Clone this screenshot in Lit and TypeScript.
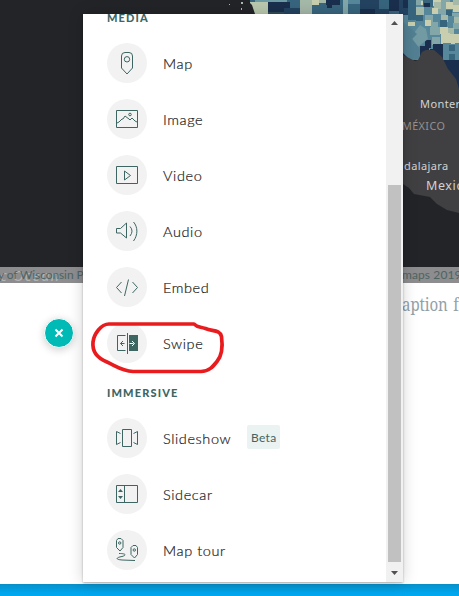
import { LitElement, html, svg, css } from "lit";
import { customElement } from "lit/decorators.js";

const pin = svg`<path d="M9 .5h4q3.500 0 3.500 3.500v12l-5.500 6-5.500-6V4Q5.500.5 9 .5z"/><circle cx="11" cy="7.300" r="2.700"/>`;
const icons: Record<string, unknown> = {
  Map: pin,
  Image: svg`<path d="M.5 2.500h21v17H.5zM1 15l2-1 3-3h1l2-3 4 3 1 1 2-2 2 2 1 1 2 1"/><circle cx="14" cy="6.500" r="1.300"/>`,
  Video: svg`<path d="M.5 2.500h21v17H.5zM8.500 7v9l6-4.500z"/>`,
  Audio: svg`<path d="M.5 8.500h4l6-5.500v15l-6-5H.5zM14 6.500q4 4.500 0 9.500M17.500 2c4.500 5 4.500 13 0 19"/>`,
  Embed: svg`<path d="M5.500 6l-5 5.500 5 5.500M16.500 6l5 5.500-5 5.500M12.500 3.500l-4 16.500"/>`,
  Swipe: svg`<path d="M9.500 3.500h-8v15h8M11.500 1v21M8.500 11.500H4.500M7 9l-2.500 2.500L7 14"/><path class="solid" d="M13 3h9v16h-9z"/><path class="light" d="M13.500 11.500h4M16 9l2.500 2.500L16 14"/>`,
  Slideshow: svg`<path d="M6.500 2.500h9v17h-9zM4.500 6.500l-4-2v13l4-2M17.500 6.500l4-2v13l-4-2"/>`,
  Sidecar: svg`<path d="M.5 2.500h21v17H.5zM8.500 2.500v17"/><path class="solid" d="M2 9l2.500-3L7 9zM2 13l2.500 3L7 13z"/>`,
  "Map tour": svg`<path d="M2-.5h3l2 2v7l-3 3.500-3.500-3.500v-7zM17 6.500h3l1.500 2v7l-3 3.500-3.500-3.500v-7zM3 14.500c8 0 7 2 3 3-6 1-7 3 0 3.500l13 .5"/><circle cx="3.700" cy="4" r="1.200"/><circle cx="18.300" cy="11" r="1.200"/>`,
};

const B = "#1a2f4d", N = "#234361", M = "#38657e", T = "#57879a", L = "#83a7a9", G = "#a5b9a9", Y = "#c9cfae";
const tiles: [number, number, number, number, string][] = [
  [250, 0, 209, 14, M], [255, 0, 32, 2, "#6d9ba5"], [250, 2, 18, 12, "#b9c9ae"], [268, 2, 22, 10, B],
  [268, 12, 16, 2, "#304b57"], [284, 8, 16, 6, N], [300, 0, 12, 14, G], [312, 0, 7, 5, Y], [319, 0, 8, 3, G],
  [326, 0, 14, 5, B], [327, 5, 5, 3, B], [343, 0, 5, 14, L], [348, 0, 12, 4, T], [348, 4, 12, 10, M],
  [360, 0, 19, 9, N], [360, 9, 15, 5, B], [375, 9, 14, 5, N], [389, 0, 10, 11, B], [399, 0, 5, 14, N],
  [403, 0, 56, 60, T], [403, 0, 13, 8, B], [408, 0, 8, 20, M], [403, 8, 5, 7, N],
  [416, 0, 7, 5, L], [421, 1, 4, 4, Y], [423, 0, 10, 7, M], [424, 3, 6, 4, B], [433, 0, 8, 6, Y],
  [434, 2, 7, 7, G], [441, 0, 9, 9, L], [446, 2, 7, 7, Y], [453, 0, 6, 5, G], [453, 5, 6, 7, Y],
  [416, 7, 8, 8, G], [424, 8, 10, 7, T], [432, 8, 6, 6, Y], [438, 9, 8, 6, L], [446, 10, 6, 6, M],
  [452, 13, 7, 6, L], [416, 15, 7, 6, M], [425, 15, 8, 7, L], [433, 14, 8, 6, T], [441, 15, 7, 7, G],
  [448, 16, 6, 6, T], [454, 17, 5, 6, G], [408, 22, 7, 4, Y], [425, 20, 6, 6, Y], [431, 22, 7, 6, L],
  [440, 20, 7, 7, M], [447, 22, 6, 6, T], [453, 23, 6, 6, L], [413, 26, 18, 7, T], [430, 27, 10, 8, L],
  [440, 27, 8, 7, Y], [448, 28, 6, 8, G], [441, 33, 9, 11, Y], [450, 34, 9, 10, Y], [417, 33, 8, 8, L],
  [425, 40, 6, 8, B], [432, 37, 8, 8, L], [433, 44, 10, 9, B], [443, 43, 8, 17, T], [449, 45, 6, 6, M],
  [455, 43, 4, 17, T], [430, 49, 13, 11, B], [449, 54, 6, 6, M],
  [443, 60, 16, 48, B], [403, 44, 5, 16, B], [420, 46, 9, 10, B],
];

@customElement("app-root")
export class AppRoot extends LitElement {
  static styles = css`
    :host { display: block; width: 459px; height: 596px; position: relative; overflow: hidden; background: #fff; font-family: Lato, "Open Sans", sans-serif; }
    .map { display: block; width: 459px; height: 267px; background: #232428; }
    .place { fill: #d2d2d2; font-family: "Noto Sans", sans-serif; font-size: 11px; letter-spacing: .4px; }
    .place.country { fill: #929294; font-size: 10.800px; }
    .place.city { font-size: 12.500px; letter-spacing: .6px; }
    .credit { position: relative; height: 16px; background: #8d8c8e; color: #4d6462; font-size: 12px; line-height: 16px; letter-spacing: .2px; white-space: nowrap; overflow: hidden; }
    .credit span { position: absolute; top: 0; }
    .credit .left { left: -2px; letter-spacing: -.1px; }
    .credit .right { left: 402px; letter-spacing: .1px; }
    .credit .ocean { left: -5px; top: 0; color: #b3b3b4; font: italic 14.500px/17px "Noto Sans", sans-serif; letter-spacing: 1.300px; }
    .caption { position: absolute; left: 402px; top: 292px; white-space: nowrap; color: #93a1a7; font: 17.500px/24px "Noto Serif", "Droid Serif", "Liberation Serif", serif; letter-spacing: -.1px; word-spacing: 2px; transform: scaleX(.86); transform-origin: left; }
    .taskbar { position: absolute; left: 0; right: 0; bottom: 0; height: 12px; background: linear-gradient(#078fc8, #00a5ec 70%, #00a8f0); z-index: 1; }
    .close { position: absolute; left: 44px; top: 318px; width: 30px; height: 30px; box-sizing: border-box; border: 1px solid #fff; border-radius: 50%; background: #00bab5; box-shadow: 0 2px 9px #0003; }
    .close svg { display: block; width: 28px; height: 28px; }
    .panel { position: absolute; left: 83px; top: 14px; width: 320px; height: 568px; z-index: 2; display: flex; background: #fff; box-shadow: 0 0 14px #0000002e, 0 1px 2px #0004; }
    .content { flex: 1; padding-left: 24px; overflow: hidden; }
    .heading { color: #3d6663; font-size: 11px; line-height: 14px; font-weight: 900; letter-spacing: 1.150px; margin: 0; }
    .media { height: 21px; line-height: 8px; }
    .immersive { height: 39px; padding-top: 15px; box-sizing: border-box; }
    .item { height: 56px; display: flex; align-items: center; gap: 16px; color: #222; font-size: 14.500px; font-weight: 300; letter-spacing: .6px; }
    .label { white-space: nowrap; -webkit-text-stroke: .2px #222; }
    .disc { width: 40px; height: 40px; border-radius: 50%; background: #f2f2f2; display: flex; align-items: center; justify-content: center; }
    .icon { width: 22px; height: 22px; overflow: visible; fill: none; stroke: #3d6663; stroke-width: 1; }
    .solid { fill: #3d6663; stroke: none; }
    .light { stroke: #fff; }
    .beta { width: 33px; height: 24px; border-radius: 2px; background: #ebf2f2; color: #3d6663; font-size: 12px; font-weight: 400; line-height: 25px; text-align: center; letter-spacing: .3px; margin-top: -2px; }
    .scrollbar { width: 17px; background: #f1f1f1; display: flex; flex-direction: column; align-items: center; }
    .arrow { width: 17px; height: 17px; fill: #505050; }
    .thumb { width: 13px; height: 377px; margin-top: 154px; background: #c1c1c1; }
    .arrow.down { margin-top: 3px; }
    .marker { position: absolute; left: 0; top: 0; width: 459px; height: 596px; z-index: 3; pointer-events: none; fill: none; stroke: #e81c1f; stroke-width: 3.700; stroke-linejoin: round; stroke-linecap: round; }
  `;

  private item(name: string) {
    return html`<div class="item">
      <div class="disc"><svg class="icon" viewBox="0 0 22 22">${icons[name]}</svg></div>
      <span class="label">${name}</span>
      ${name === "Slideshow" ? html`<span class="beta">Beta</span>` : ""}
    </div>`;
  }

  render() {
    return html`
      <svg class="map" viewBox="0 0 459 267">
        <g shape-rendering="crispEdges">${tiles.map(([x, y, w, h, c]) => svg`<rect x=${x} y=${y} width=${w} height=${h} fill=${c} />`)}</g>
        <path d="M420 25l-9 12 7 10 10-8-2-10z" fill="#719aa2"/>
        <path d="M403 22l14 12-5 5 8 10-1 9-8 3-8-8z" fill="#527f92"/>
        <path d="M220 0h27l5 5 3 9h-35z" fill="#232428"/>
        <path d="M229 4h1v1h-1zM241 2h2v2h-2zM241 8h1v2h-1z" fill="#a9bbb5"/>
        <path d="M403 55l6 3 6 3 3-1 4-8 4-2h8l8 7 6 12 8 10 3 10v124l-12-3-10-6-7-7-16-3-5-6-6-4z" fill="#404042"/>
        <text class="place" x="420" y="108">Monterrey</text>
        <text class="place country" x="402" y="130">MÉXICO</text>
        <text class="place" x="404" y="170">dalajara</text>
        <text class="place city" x="426" y="190">Mexico City</text>
      </svg>
      <div class="credit">
        <span class="ocean">ic Ocean</span><span class="left">y of Wisconsin Parks</span><span class="right">maps 2019</span>
      </div>
      <div class="caption">aption for</div>
      <div class="taskbar"></div>
      <div class="close"><svg viewBox="0 0 28 28" fill="none" stroke="#fff" stroke-width="2"><path d="M10.500 10.500l7 7m0-7l-7 7"/></svg></div>
      <div class="panel">
        <div class="content">
          <div class="heading media">MEDIA</div>
          ${["Map", "Image", "Video", "Audio", "Embed", "Swipe"].map((n) => this.item(n))}
          <div class="heading immersive">IMMERSIVE</div>
          ${["Slideshow", "Sidecar", "Map tour"].map((n) => this.item(n))}
        </div>
        <div class="scrollbar">
          <svg class="arrow" viewBox="0 0 17 17"><path d="M5 11l3.500-4 3.500 4z"/></svg>
          <div class="thumb"></div>
          <svg class="arrow down" viewBox="0 0 17 17"><path d="M5 6l3.500 4 3.500-4z"/></svg>
        </div>
      </div>
      <svg class="marker" viewBox="0 0 459 596"><path d="M194 324H109c-8 0-15 10-16 18-1 10 4 16 14 20 9 4 15 9 26 9.500h68c8 0 12-5 16-10 5-6 6-14 4.500-25-2-7-9-5-16-8-6-2-8-1-11.500-4.500z"/></svg>
    `;
  }
}
